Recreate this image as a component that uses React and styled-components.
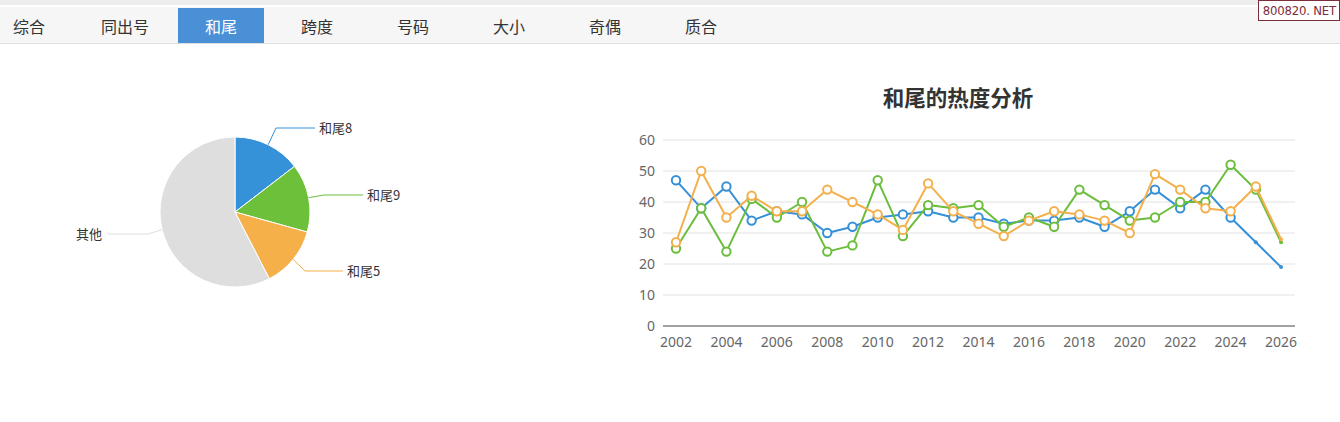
import React from "react";
import styled, { createGlobalStyle } from "styled-components";

const GlobalStyle = createGlobalStyle`
  body {
    margin: 0;
    background: #fff;
    font-family: "Noto Sans CJK SC", "Noto Sans", sans-serif;
    color: #333;
  }
`;

const tabs = ["综合", "同出号", "和尾", "跨度", "号码", "大小", "奇偶", "质合"];

const years = Array.from({ length: 25 }, (_, i) => 2002 + i);

const series = [
  {
    color: "#3590d8",
    data: [47, 38, 45, 34, 37, 36, 30, 32, 35, 36, 37, 35, 35, 33, 34, 34, 35, 32, 37, 44, 38, 44, 35, 27, 19],
    small: [23, 24],
  },
  {
    color: "#6bbd3c",
    data: [25, 38, 24, 41, 35, 40, 24, 26, 47, 29, 39, 38, 39, 32, 35, 32, 44, 39, 34, 35, 40, 40, 52, 44, 27],
    small: [24],
  },
  {
    color: "#f3b04c",
    data: [27, 50, 35, 42, 37, 37, 44, 40, 36, 31, 46, 37, 33, 29, 34, 37, 36, 34, 30, 49, 44, 38, 37, 45, 28],
    small: [24],
  },
];

const slices = [
  { name: "和尾8", value: 52.5, color: "#3592d9" },
  { name: "和尾9", value: 53, color: "#6cc03a" },
  { name: "和尾5", value: 47.3, color: "#f5b04a" },
  { name: "其他", value: 207.2, color: "#dedede" },
];

export default function App() {
  return (
    <Page>
      <GlobalStyle />
      <TopStrip />
      <TabBar>
        {tabs.map((t) => (
          <Tab key={t} $active={t === "和尾"}>
            {t}
          </Tab>
        ))}
      </TabBar>
      <Watermark>800820. NET</Watermark>
      <Content>
        <PiePanel>
          <PieChart />
        </PiePanel>
        <ChartPanel>
          <ChartTitle>和尾的热度分析</ChartTitle>
          <LineChart />
        </ChartPanel>
      </Content>
    </Page>
  );
}

const polar = (cx, cy, r, deg) => {
  const a = (deg * Math.PI) / 180;
  return [cx + r * Math.sin(a), cy - r * Math.cos(a)];
};

const PieChart = () => {
  const cx = 235;
  const cy = 168;
  const r = 75;
  let start = 0;
  const labels = {
    和尾8: { elbow: [276, 84], end: [315, 84], anchor: "start" },
    和尾9: { elbow: [324, 151], end: [363, 151], anchor: "start" },
    和尾5: { elbow: [305, 227], end: [343, 227], anchor: "start" },
    其他: { elbow: [148, 190], end: [108, 190], anchor: "end" },
  };
  return (
    <svg width="630" height="320" viewBox="0 0 630 320">
      {slices.map((s) => {
        const end = start + s.value;
        const [x1, y1] = polar(cx, cy, r, start);
        const [x2, y2] = polar(cx, cy, r, end);
        const large = s.value > 180 ? 1 : 0;
        const mid = start + s.value / 2;
        const [mx, my] = polar(cx, cy, r, mid);
        const l = labels[s.name];
        start = end;
        return (
          <g key={s.name}>
            <path
              d={`M${cx},${cy} L${x1},${y1} A${r},${r} 0 ${large} 1 ${x2},${y2} Z`}
              fill={s.color}
              stroke="#fff"
              strokeWidth="1"
            />
            <polyline
              points={`${mx},${my} ${l.elbow[0]},${l.elbow[1]} ${l.end[0]},${l.end[1]}`}
              fill="none"
              stroke={s.color}
              strokeWidth="1"
            />
            <text
              x={l.anchor === "start" ? l.end[0] + 4 : l.end[0] - 6}
              y={l.end[1] + 4.5}
              textAnchor={l.anchor}
              fontSize="13"
              fill="#333"
              fontFamily='"Noto Sans CJK SC", "Noto Sans", sans-serif'
            >
              {s.name}
            </text>
          </g>
        );
      })}
    </svg>
  );
};

const LineChart = () => {
  const x = (i) => 46 + i * 25.21;
  const y = (v) => 216 - v * 3.1;
  return (
    <svg width="710" height="250" viewBox="0 0 710 250">
      {[10, 20, 30, 40, 50, 60].map((v) => (
        <line key={v} x1="33" x2="665" y1={y(v)} y2={y(v)} stroke="#e2e2e2" strokeWidth="1" />
      ))}
      <line x1="33" x2="665" y1={y(0)} y2={y(0)} stroke="#444" strokeWidth="1" />
      {[0, 10, 20, 30, 40, 50, 60].map((v) => (
        <AxisText key={v} x="25" y={y(v) + 5} textAnchor="end">
          {v}
        </AxisText>
      ))}
      {years.map((yr, i) =>
        i % 2 === 0 ? (
          <AxisText key={yr} x={x(i)} y="237" textAnchor="middle">
            {yr}
          </AxisText>
        ) : null
      )}
      {series.map((s) => (
        <g key={s.color}>
          <polyline
            points={s.data.map((v, i) => `${x(i)},${y(v)}`).join(" ")}
            fill="none"
            stroke={s.color}
            strokeWidth="2"
            strokeLinejoin="round"
          />
          {s.data.map((v, i) =>
            s.small.includes(i) ? (
              <circle key={i} cx={x(i)} cy={y(v)} r="2" fill={s.color} />
            ) : (
              <circle key={i} cx={x(i)} cy={y(v)} r="4.2" fill="#fff" stroke={s.color} strokeWidth="2" />
            )
          )}
        </g>
      ))}
    </svg>
  );
};

const Page = styled.div`
  position: relative;
  width: 1340px;
  height: 422px;
  overflow: hidden;
  background: #fff;
`;

const TopStrip = styled.div`
  height: 5px;
  background: #ededed;
  border-bottom: 2px solid #fff;
`;

const TabBar = styled.div`
  display: flex;
  gap: 10px;
  height: 35px;
  margin-left: -14px;
  padding-top: 1px;
  background: #f6f6f6;
  border-bottom: 1px solid #dedede;
`;

const Tab = styled.div`
  width: 86px;
  display: flex;
  align-items: center;
  justify-content: center;
  font-size: 16px;
  color: ${(p) => (p.$active ? "#fff" : "#333")};
  background: ${(p) => (p.$active ? "#4a90d6" : "transparent")};
`;

const Watermark = styled.div`
  position: absolute;
  top: 0;
  right: 0;
  height: 19px;
  padding: 0 3px 0 4px;
  display: flex;
  align-items: center;
  background: #fff;
  border: 1px solid #7d2c3c;
  color: #7d2c3c;
  font-family: "DejaVu Sans Condensed", "Liberation Sans", sans-serif;
  font-size: 13px;
  letter-spacing: -0.2px;
`;

const Content = styled.div`
  display: flex;
`;

const PiePanel = styled.div`
  width: 630px;
`;

const ChartPanel = styled.div`
  width: 710px;
  display: flex;
  flex-direction: column;
`;

const ChartTitle = styled.div`
  margin-top: 39px;
  height: 27px;
  line-height: 27px;
  padding-right: 54px;
  text-align: center;
  font-size: 21.5px;
  font-weight: bold;
  color: #333;
`;

const AxisText = styled.text`
  font-family: "Noto Sans", "Open Sans", sans-serif;
  font-size: 14px;
  fill: #666;
`;
